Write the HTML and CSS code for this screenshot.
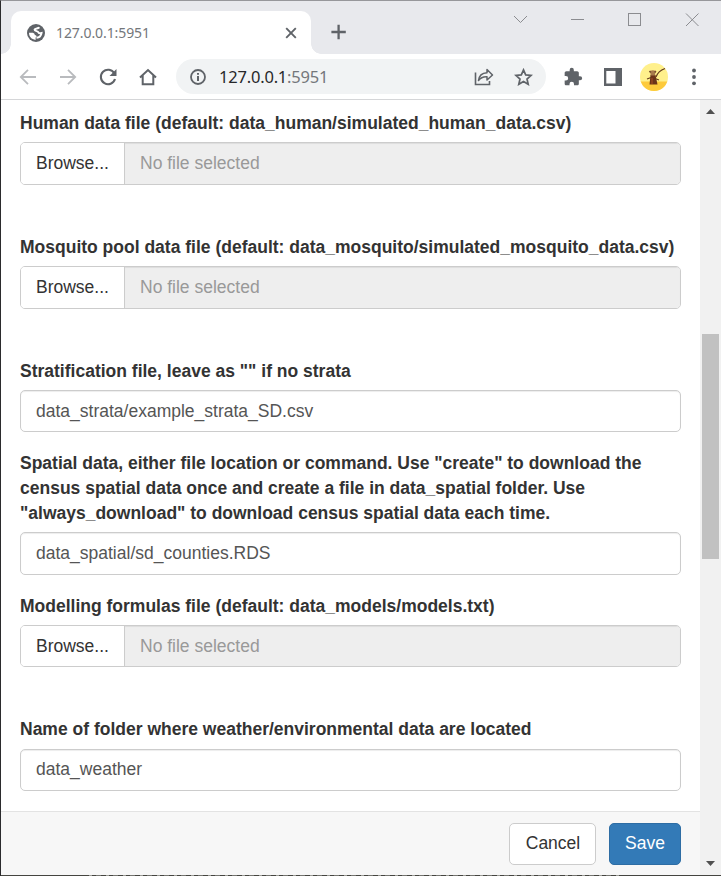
FILE: index.html
```html
<!DOCTYPE html>
<html lang="en">
<head>
<meta charset="utf-8">
<title>127.0.0.1:5951</title>
<link rel="stylesheet" href="styles.css">
</head>
<body>
<div class="window">
  <header class="tabstrip">
    <div class="tab">
      <svg class="globe" width="18" height="18" viewBox="0 0 18 18"><circle cx="9" cy="9" r="9" fill="#5f6368"/><path d="M2 8.800 H5.800 Q7.600 9 7.900 11 Q9.700 11 9.600 12.700 L8.600 13.500 V15.900 C4.500 15.500 2 12.600 2 8.800Z" fill="#fff"/><path d="M12.300 3.300 C11.500 4.900 8 3.900 7.600 5.500 C7.500 7.500 10.800 6.700 11.300 8.300 C11.600 9.600 13.500 9.300 14.500 9.100 C14 12.300 12 13.500 9.500 13.700" fill="none" stroke="#fff" stroke-width="2"/></svg>
      <span class="tab-title">127.0.0.1:5951</span>
      <svg width="12" height="12" viewBox="0 0 12 12"><path d="M1.2 1.2 L10.8 10.8 M10.8 1.2 L1.2 10.8" stroke="#5f6368" stroke-width="1.9"/></svg>
    </div>
    <svg class="plus" width="16" height="16" viewBox="0 0 16 16"><path d="M7.600 .8 V15.2 M.4 8 H14.800" stroke="#5f6368" stroke-width="2.300"/></svg>
    <svg class="controls" width="188" height="16" viewBox="0 0 188 16" fill="none" stroke="#8b8c90" stroke-width="1"><path d="M1 4 L7.5 10.5 L14 4"/><path d="M58 7.5 H71"/><rect x="115.5" y="1.5" width="12" height="12"/><path d="M173 1.5 L185.500 14 M185.500 1.500 L173 14"/></svg>
  </header>
  <nav class="toolbar">
    <svg class="nav-icon" viewBox="0 0 20 20" fill="none" stroke="#b9bbbe" stroke-width="1.8"><path d="M18 10 H3 M10 2.800 L2.800 10 L10 17.200"/></svg>
    <svg class="nav-icon" viewBox="0 0 20 20" fill="none" stroke="#b9bbbe" stroke-width="1.8"><path d="M2 10 H17 M10 2.800 L17.200 10 L10 17.200"/></svg>
    <svg class="nav-icon" viewBox="0 0 20 20"><path d="M16.300 6.300 A7.200 7.200 0 1 0 17 12" fill="none" stroke="#5f6368" stroke-width="2.100"/><path d="M18.500 2 V9 H11.500Z" fill="#5f6368"/></svg>
    <svg class="nav-icon" viewBox="0 0 20 20"><path d="M2 10.500 L10 3 L18 10.500 M4.700 8.500 V17.200 H15.300 V8.500" fill="none" stroke="#5f6368" stroke-width="2"/></svg>
    <div class="omnibox">
      <svg width="16" height="16" viewBox="0 0 16 16"><circle cx="8" cy="8" r="7" fill="none" stroke="#5f6368" stroke-width="1.800"/><path d="M7 7 H9 V12 H7Z M7 4 H9 V5.800 H7Z" fill="#5f6368"/></svg>
      <span class="url">127.0.0.1<span class="port">:5951</span></span>
      <svg class="share" width="20" height="18" viewBox="0 0 20 18" fill="none" stroke="#5f6368" stroke-width="1.600"><path d="M1.500 4.500 V16.500 H15.500 V13"/><path d="M4.500 12.500 C5 8 8 5 13 4.700 V1.500 L18.500 7 L13 12 V8.700 C9.500 8.500 6.500 9.600 4.500 12.500Z" stroke-linejoin="round" stroke-width="1.500"/></svg>
      <svg width="19" height="18" viewBox="0 0 19 18"><path d="M9.500 1.900 L11.700 6.900 L17.100 7.400 L13 11 L14.200 16.300 L9.500 13.500 L4.800 16.300 L6 11 L1.900 7.400 L7.300 6.900Z" fill="none" stroke="#5f6368" stroke-width="1.700"/></svg>
    </div>
    <div class="actions">
      <svg width="20" height="20" viewBox="0 0 24 24" fill="#5f6368"><path d="M20.500 11H19V7c0-1.100-.900-2-2-2h-4V3.500a2.500 2.500 0 0 0-5 0V5H4c-1.100 0-2 .900-2 2v3.800h1.500a2.700 2.700 0 0 1 0 5.400H2V20c0 1.100.900 2 2 2h3.800v-1.500a2.700 2.700 0 0 1 5.400 0V22H17c1.100 0 2-.900 2-2v-4h1.500a2.500 2.500 0 0 0 0-5z"/></svg>
      <svg width="18" height="18" viewBox="0 0 18 18"><path d="M0 0H18V18H0Z M2.300 3V15.500H11.500V3Z" fill="#5f6368" fill-rule="evenodd"/></svg>
      <svg width="28" height="28" viewBox="0 0 28 28"><defs><clipPath id="avatar"><circle cx="14" cy="14" r="14"/></clipPath></defs><g clip-path="url(#avatar)"><path d="M0 0H28V28H0Z" fill="#fff08c"/><path d="M0 18.500H28V28H0Z" fill="#fdca3b"/></g><path d="M10.500 12 H15.500 L17.500 21.500 H9.500Z" fill="#6b3319"/><path d="M10 8 Q13 6.500 15.500 8 L15 12.500 H10.700Z" fill="#a77a4c"/><path d="M9.500 8 L10.700 9.500 M15.800 8 L14.800 9.500" stroke="#74492c" stroke-width="1.600"/><path d="M7 16 L11 14.500 M15 15.500 L19 17 M16 14 Q18 8 25 5.500" fill="none" stroke="#633a1c" stroke-width="1.100"/><path d="M12 15V21" stroke="#a84d24"/></svg>
      <svg width="4" height="18" viewBox="0 0 4 18" fill="#5f6368"><circle cx="2" cy="2.500" r="1.900"/><circle cx="2" cy="9" r="1.900"/><circle cx="2" cy="15.300" r="1.900"/></svg>
    </div>
  </nav>
  <div class="viewport">
    <div class="page">
      <main class="form">
        <div class="group file">
          <label>Human data file (default: data_human/simulated_human_data.csv)</label>
          <div class="file-row"><span class="browse">Browse...</span><span class="filename">No file selected</span></div>
        </div>
        <div class="group file">
          <label>Mosquito pool data file (default: data_mosquito/simulated_mosquito_data.csv)</label>
          <div class="file-row"><span class="browse">Browse...</span><span class="filename">No file selected</span></div>
        </div>
        <div class="group">
          <label for="strata">Stratification file, leave as "" if no strata</label>
          <input id="strata" class="control" type="text" value="data_strata/example_strata_SD.csv">
        </div>
        <div class="group">
          <label for="spatial">Spatial data, either file location or command. Use "create" to download the census spatial data once and create a file in data_spatial folder. Use "always_download" to download census spatial data each time.</label>
          <input id="spatial" class="control" type="text" value="data_spatial/sd_counties.RDS">
        </div>
        <div class="group file models">
          <label>Modelling formulas file (default: data_models/models.txt)</label>
          <div class="file-row"><span class="browse">Browse...</span><span class="filename">No file selected</span></div>
        </div>
        <div class="group">
          <label for="weather">Name of folder where weather/environmental data are located</label>
          <input id="weather" class="control" type="text" value="data_weather">
        </div>
      </main>
      <footer class="footer">
        <button class="btn">Cancel</button>
        <button class="btn primary">Save</button>
      </footer>
    </div>
    <div class="scrollbar">
      <svg width="9" height="5" viewBox="0 0 9 5"><path d="M0 5 L4.500 0 L9 5Z" fill="#505050"/></svg>
      <div class="thumb"></div>
      <svg class="down" width="9" height="5" viewBox="0 0 9 5"><path d="M0 0 L4.500 5 L9 0Z" fill="#505050"/></svg>
    </div>
  </div>
  <div class="edge"></div>
</div>
</body>
</html>
```
FILE: styles.css
```css
* { box-sizing: border-box; }
body { margin: 0; background: #fff; font-family: "Liberation Sans", Arial, sans-serif; }
svg { display: block; flex: none; }

.window {
  display: flex;
  flex-direction: column;
  width: 721px;
  height: 876px;
  overflow: hidden;
  border-top: 1px solid #97979b;
  border-left: 1px solid #2b2b2d;
}

.tabstrip { display: flex; height: 53px; flex: none; padding-left: 10px; background: #e8e9ed; }
.tab {
  position: relative;
  display: flex;
  align-items: center;
  width: 300px;
  height: 43px;
  margin-top: 10px;
  padding: 0 14px 0 16px;
  border-radius: 10px 10px 0 0;
  background: #fff;
}
.tab::before, .tab::after { content: ""; position: absolute; bottom: 0; width: 10px; height: 10px; }
.tab::before { right: 100%; background: radial-gradient(circle at 0 0, transparent 9.5px, #fff 10px); }
.tab::after { left: 100%; background: radial-gradient(circle at 100% 0, transparent 9.5px, #fff 10px); }
.tab-title {
  flex: 1;
  margin-left: 11px;
  font: 14px "Noto Sans", sans-serif;
  letter-spacing: -0.08px;
  color: #74777b;
}
.plus { margin: 23px 0 0 20px; }
.controls { margin: 11px 0 0 166px; }

.toolbar {
  display: flex;
  align-items: center;
  height: 46px;
  flex: none;
  padding: 0 26px 0 17px;
  border-bottom: 1px solid #d5d6d8;
}
.nav-icon { width: 20px; height: 20px; flex: none; margin-right: 20px; }
.omnibox {
  display: flex;
  align-items: center;
  flex: none;
  width: 370px;
  height: 35px;
  margin-left: -2px;
  padding: 0 13px 0 14px;
  border-radius: 18px;
  background: #f1f3f4;
}
.url { flex: 1; margin-left: 13px; font: 16.5px "Noto Sans", sans-serif; letter-spacing: -0.2px; color: #27282a; }
.port { color: #74777b; }
.share { margin-right: 20px; }
.actions { display: flex; align-items: center; margin-left: 17px; }
.actions svg:nth-child(2) { margin-left: 21px; }
.actions svg:nth-child(3) { margin-left: 18px; }
.actions svg:nth-child(4) { margin-left: 24px; }

.viewport { display: flex; flex: 1; min-height: 0; }
.page { display: flex; flex-direction: column; flex: 1; }
.form { flex: 1; min-height: 0; padding: 11px 19px 0; overflow: hidden; }
.group { margin-bottom: 18.75px; }
.group.file { margin-bottom: 50px; }
.group label {
  display: block;
  margin-bottom: 6.25px;
  font-size: 17.5px;
  font-weight: 700;
  line-height: 25px;
  color: #333;
}
.control, .file-row {
  display: flex;
  width: 100%;
  height: 42.5px;
  border: 1px solid #ccc;
  border-radius: 5px;
  font: 17.5px/25px "Liberation Sans", Arial, sans-serif;
}
.control { padding: 7.5px 15px; color: #555; background: #fff; box-shadow: inset 0 1px 1px rgba(0, 0, 0, .075); }
.file-row { overflow: hidden; }
.browse { width: 104px; padding: 7.5px 15px; border-right: 1px solid #ccc; color: #333; background: #fff; }
.filename { flex: 1; padding: 7.5px 15px; color: #999; background: #eee; box-shadow: inset 0 1px 1px rgba(0, 0, 0, .075); }
.models .browse, .models .filename { padding-top: 8px; padding-bottom: 7px; }

.footer {
  display: flex;
  justify-content: flex-end;
  gap: 13px;
  height: 64px;
  flex: none;
  padding: 11px 19px 0;
  border-top: 1px solid #e3e3e3;
  background: #f7f7f7;
}
.btn {
  width: 87px;
  height: 42px;
  padding: 0 0 2px 1px;
  border: 1px solid #ccc;
  border-radius: 5px;
  background: #fff;
  color: #333;
  font: 17.5px/25px "Liberation Sans", Arial, sans-serif;
}
.btn.primary { width: 72px; padding-left: 0; border-color: #2e6da4; background: #337ab7; color: #fff; }

.scrollbar {
  display: flex;
  flex-direction: column;
  align-items: center;
  width: 21px;
  padding: 9px 0 9px;
  background: #f1f1f1;
}
.thumb { width: 17px; height: 225px; margin-top: 220px; background: #c1c1c1; }
.down { margin-top: auto; }

.edge {
  height: 1px;
  flex: none;
  background:
    repeating-linear-gradient(90deg, #9a9a94 0 3px, transparent 3px 7px, #74746f 7px 12px, transparent 12px 17px) 88px 0 / 532px 1px no-repeat,
    #454540;
}
```
